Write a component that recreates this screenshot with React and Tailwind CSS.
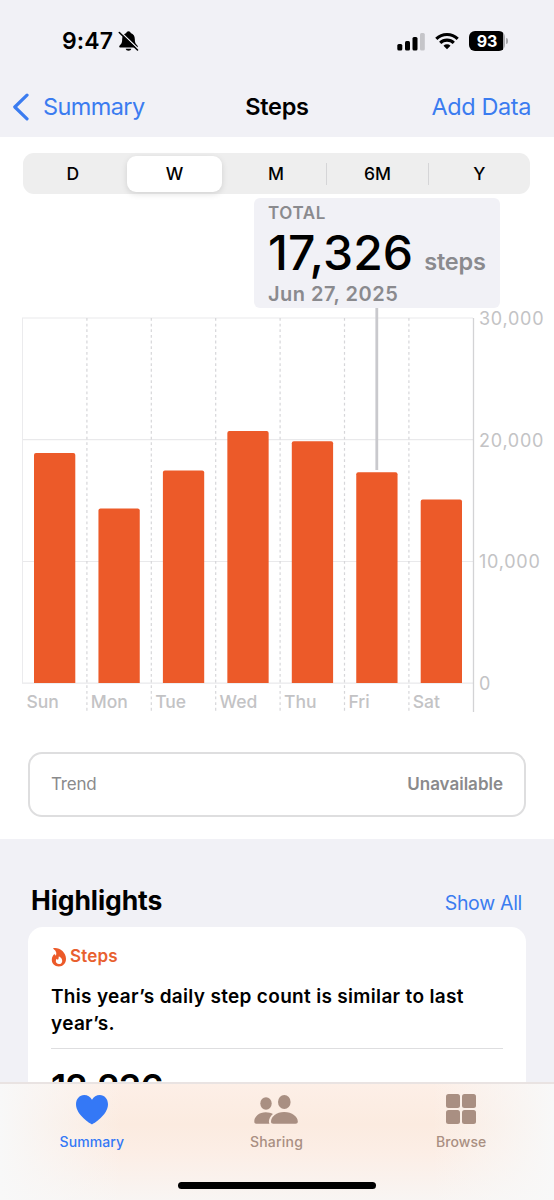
import React from 'react';

const tabs = ['D', 'W', 'M', '6M', 'Y'];

const days = [
    { label: 'Sun', top: 453 },
    { label: 'Mon', top: 508.5 },
    { label: 'Tue', top: 470.5 },
    { label: 'Wed', top: 431 },
    { label: 'Thu', top: 441.3 },
    { label: 'Fri', top: 472.3 },
    { label: 'Sat', top: 499.5 },
];

const gridLines = [
    { label: '30,000', y: 318 },
    { label: '20,000', y: 439.7 },
    { label: '10,000', y: 561.5 },
    { label: '0', y: 683.2 },
];

const StatusBar = () => (
    <div className="h-[76px] pt-[28px] pl-[62px] pr-[46px] flex justify-between items-start">
        <div className="flex items-center h-[26px]">
            <span className="text-[23px] leading-[26px] font-semibold tracking-[0.1px]">9:47</span>
            <svg className="ml-[5px]" width="21" height="22" viewBox="0 0 20 22">
                <path d="M10 1.3c-1.2 0-2 .8-2.2 1.8C5 4 3.700 6.300 3.700 9c0 3.600-.7 4.600-1.900 5.800-.7.7-1.100 1.100-1.100 1.700 0 .7.5 1.100 1.300 1.100h16c.8 0 1.300-.4 1.300-1.100 0-.6-.4-1-1.100-1.700-1.200-1.200-1.900-2.200-1.900-5.800 0-2.700-1.300-5-4.100-5.900C12 2.100 11.200 1.300 10 1.300z" />
                <path d="M7.200 18.700h5.600c-.2 1.300-1.300 2-2.800 2s-2.600-.7-2.800-2z" />
                {/* slash with a gap only on its upper side */}
                <path d="M1.600 1.400L19.600 18.700" stroke="#f1f1f6" strokeWidth="1.400" />
                <path d="M0.800 2.500L19 20" stroke="#000" strokeWidth="1.600" strokeLinecap="round" />
            </svg>
        </div>
        <div className="flex items-center h-[26px]">
            <svg width="28" height="19" viewBox="0 0 28 19">
                <rect x="0.300" y="12" width="5" height="6.500" rx="1.500" />
                <rect x="8" y="9" width="5" height="9.500" rx="1.500" />
                <rect x="15.500" y="5" width="5" height="13.500" rx="1.500" />
                <rect x="23" y="1" width="4.800" height="17.500" rx="1.500" fill="#c5c5c9" />
            </svg>
            <svg className="ml-[10px]" width="24" height="18" viewBox="0 0 24 18">
                <g fill="none" stroke="#000" strokeWidth="3.100">
                    <path d="M1.300 6.900a15.200 15.200 0 0 1 21.400 0" />
                    <path d="M5.200 10.900a9.700 9.700 0 0 1 13.600 0" />
                </g>
                <path d="M12 17.300l-3.500-3.500a5 5 0 0 1 7 0z" />
            </svg>
            <div className="ml-[10px] w-[36px] h-[20px] rounded-[6px] bg-[linear-gradient(90deg,#000_94%,#a9a9ad_94%)] text-white text-[16px] leading-[20px] font-bold text-center tracking-[-0.2px]">93</div>
            <div className="ml-[1px] w-[2px] h-[6px] rounded-r-full bg-[#a9a9ad]" />
        </div>
    </div>
);

const Chart = () => (
    <svg className="block" width="554" height="444" viewBox="0 308 554 444">
        {gridLines.map((g) => (
            <g key={g.label}>
                <line x1="22" x2="473" y1={g.y} y2={g.y} stroke="#e9e9eb" strokeWidth="1.200" />
                <text x="479" y={g.y + 6.800} fontSize="18" letterSpacing="0.750" fill="#c3c3c5">{g.label}</text>
            </g>
        ))}
        <line x1="22.500" x2="22.500" y1="318" y2="683" stroke="#ebebed" />
        <line x1="473.500" x2="473.500" y1="318" y2="712" stroke="#d3d3d5" strokeWidth="1.300" />
        {days.map((d, i) => (
            <g key={d.label}>
                {i > 0 && (
                    <line x1={22.5 + i * 64.4} x2={22.5 + i * 64.4} y1="318" y2="712" stroke="#d6d6d9" strokeWidth="1.200" strokeDasharray="2.800 2.850" />
                )}
                <path d={`M${34 + i * 64.45} 683V${d.top + 2}q0-2 2-2h37.300q2 0 2 2V683z`} fill="#ec5a29" />
                <text x={26.4 + i * 64.4} y="708" fontSize="17.500" fontWeight="500" fill="#c3c3c5">{d.label}</text>
            </g>
        ))}
        <line x1="376.800" x2="376.800" y1="308" y2="470" stroke="#c9c9cd" strokeWidth="2.800" />
    </svg>
);

const TabBar = () => (
    <div className="absolute inset-x-0 bottom-0 h-[118px] border-t-2 border-[#e9e3e2] bg-[linear-gradient(90deg,#f8f8f8_0%,#f8f8f800_22%,#f8f8f800_78%,#f8f8f8_100%),linear-gradient(180deg,#fdefe7_0%,#fbebe0_35%,#fceee6_60%,#f8f5f3_100%)]">
        <div className="grid grid-cols-3 h-[70px] pt-[9px] text-[14px] leading-[18px] font-medium text-[#a98f82]">
            <div className="pr-[1px] flex flex-col items-center text-[#3478f6]">
                <svg width="34" height="32" viewBox="0 0 34 32" fill="#3478f6">
                    <path d="M17 31.300C16 31.300 1 22 1 11.300 1 6 4.500 2 9.200 2c3.300 0 6.200 1.700 7.800 4.800C18.600 3.700 21.500 2 24.800 2 29.500 2 33 6 33 11.300 33 22 18 31.300 17 31.300z" />
                </svg>
                <span className="mt-[8px] tracking-[0.1px]">Summary</span>
            </div>
            <div className="pr-[1px] flex flex-col items-center">
                <svg width="46" height="32" viewBox="0 0 46 32" fill="#a98f82">
                    <ellipse cx="13" cy="10.500" rx="5.700" ry="6.200" />
                    <path d="M1.300 28.500c0-5 4.800-9.300 11.500-9.300 3 0 5.300.7 7.100 1.900-2.600 2.200-4 5.100-4 7.600 0 .8.200 1.500.600 2H3.300C1.900 30.700 1.300 30 1.300 28.500z" />
                    <ellipse cx="31.300" cy="9" rx="6.300" ry="7" />
                    <path d="M18 28.500c0-4.800 5.300-9.600 13.200-9.600s13.600 4.800 13.600 9.600c0 1.500-.8 2.200-2.300 2.200H20.300c-1.500 0-2.300-.7-2.300-2.200z" />
                </svg>
                <span className="mt-[8px] tracking-[0.2px]">Sharing</span>
            </div>
            <div className="pr-[1px] flex flex-col items-center">
                <svg width="32" height="32" viewBox="0 0 32 32" fill="#a98f82">
                    <rect x="1" y="1" width="14" height="14" rx="2.500" />
                    <rect x="17" y="1" width="14" height="14" rx="2.500" />
                    <rect x="1" y="17" width="14" height="14" rx="2.500" />
                    <rect x="17" y="17" width="14" height="14" rx="2.500" />
                </svg>
                <span className="mt-[8px] tracking-[0.1px]">Browse</span>
            </div>
        </div>
        <div className="mt-[28px] mx-auto w-[198px] h-[7px] rounded-full bg-black" />
    </div>
);

const App = () => {
    return (
        <div className="relative w-[554px] h-[1200px] overflow-hidden bg-[#f1f1f6] text-black font-['Inter',sans-serif]">
            <StatusBar />
            <div className="h-[61px] px-[12px] grid grid-cols-[1fr_auto_1fr] items-center text-[23.5px] leading-[60px]">
                <div className="flex items-center text-[#3b7cf0]">
                    <svg width="18" height="28" viewBox="0 0 18 28" fill="none" stroke="#3b7cf0" strokeWidth="3.200" strokeLinecap="round" strokeLinejoin="round">
                        <path d="M15 2.200L2.800 14 15 25.800" />
                    </svg>
                    <span className="ml-[13px] tracking-[-0.6px]">Summary</span>
                </div>
                <span className="font-semibold tracking-[-0.3px]">Steps</span>
                <span className="pr-[11px] text-right text-[#3b7cf0] tracking-[-0.4px]">Add Data</span>
            </div>

            <div className="h-[702px] bg-white pt-[16px]">
                <div className="ml-[23px] mr-[24px] h-[41px] rounded-[11px] bg-[#eeeeee] grid grid-cols-5 items-center text-center text-[17.500px] font-medium">
                    {tabs.map((t) => (
                        <div
                            key={t}
                            className={t === 'W'
                                ? 'ml-[3px] mr-[4px] h-[36px] leading-[36px] rounded-[9px] bg-white shadow-[0_2px_6px_rgba(0,0,0,0.12)]'
                                : t === 'M' || t === '6M'
                                    ? 'h-[22px] leading-[22px] border-r border-[#d5d5d7]'
                                    : t === 'D'
                                        ? 'pr-[2px] h-[22px] leading-[22px]'
                                        : 'h-[22px] leading-[22px]'}
                        >
                            {t}
                        </div>
                    ))}
                </div>

                <div className="mt-[4px] ml-[254px] w-[246px] h-[110px] rounded-[6px] bg-[#f1f1f6] pl-[14px] pt-[5px] font-semibold text-[#8a8a8e]">
                    <div className="text-[17px] leading-[20px] font-semibold tracking-[0.6px]">TOTAL</div>
                    <div className="flex items-baseline h-[60px] leading-[60px]">
                        <span className="text-[48px] font-medium tracking-[0.1px] text-black">17,326</span>
                        <span className="ml-[11px] text-[23.5px] tracking-[-0.2px]">steps</span>
                    </div>
                    <div className="text-[20px] leading-[22px] tracking-[0.5px]">Jun 27, 2025</div>
                </div>

                <Chart />

                <div className="mx-[28px] h-[65px] px-[21px] flex items-center justify-between border-2 border-[#dededf] rounded-[14px] text-[17px] text-[#8a8a8c]">
                    <span className="tracking-[-0.2px]">Trend</span>
                    <span className="font-semibold">Unavailable</span>
                </div>
            </div>

            <div className="pl-[31px] pr-[32px] h-[88px] pt-[43px] flex justify-between">
                <h2 className="text-[26.5px] leading-[36px] font-bold tracking-[-0.1px]">Highlights</h2>
                <span className="pt-[3px] text-[19.5px] leading-[36px] tracking-[-0.3px] text-[#3b7cf0]">Show All</span>
            </div>
            <div className="mx-[28px] h-[300px] rounded-[15px] bg-white px-[23px] pt-[18px]">
                <div className="flex items-center h-[24px] text-[#e8602f]">
                    <svg className="-mt-[1px]" width="16" height="20" viewBox="0 0 16 20">
                        <path d="M2.800 1c5.600-.8 12.200 4 12.200 10.800 0 4.600-3 7.700-7.200 7.700C3.600 19.500.8 16.700.8 12.800c0-2.400 1-4.200 2.100-5.300.6-.6 1.100-.3 1.300.3.1.5.3.8.6 1C5.900 6.500 5.400 3.700 2.500 2 2 1.600 2.100 1.100 2.800 1z" fill="#ec5a29" />
                        <path d="M8.200 9.500c2.200 1.200 3 2.800 3 4.400 0 1.900-1.300 3.100-3.200 3.100s-3.200-1.300-3.200-2.900c0-1.100.4-1.800 1-2.300.3.600.7.900 1.200 1 .5-.9.800-2 .7-2.900 0-.3.200-.5.500-.4z" fill="#fff" />
                    </svg>
                    <span className="ml-[3px] text-[17px] font-semibold tracking-[0.2px]">Steps</span>
                </div>
                <p className="mt-[14px] text-[19px] leading-[27px] font-semibold tracking-[0.320px]">This year’s daily step count is similar to last year’s.</p>
                <div className="mt-[11px] h-px bg-[#dedee0]" />
                <div className="mt-[16px] text-[36px] leading-[44px] font-semibold tracking-[-1px]">12,236</div>
            </div>
            <TabBar />
        </div>
    );
};

export default App;
